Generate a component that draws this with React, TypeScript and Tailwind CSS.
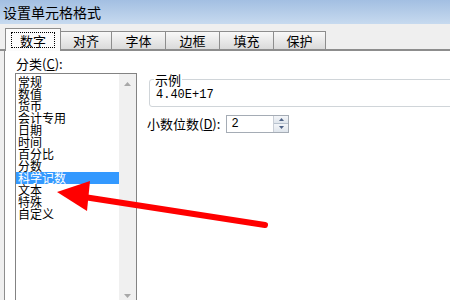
// Excel "设置单元格格式" dialog, number tab, with red annotation arrow

const FONT = '"Noto Sans CJK SC", "DejaVu Sans", sans-serif';

const tabs = ["数字", "对齐", "字体", "边框", "填充", "保护"];
const tabWidths = [56, 51, 54, 54, 54, 52];

const categories = [
  "常规",
  "数值",
  "货币",
  "会计专用",
  "日期",
  "时间",
  "百分比",
  "分数",
  "科学记数",
  "文本",
  "特殊",
  "自定义",
];

export default function App() {
  return (
    <div
      className="relative w-[450px] h-[300px] overflow-hidden bg-[#efefef] text-black"
      style={{ fontFamily: FONT }}
    >
      {/* Title bar */}
      <div className="h-[24px] bg-gradient-to-b from-[#a3bfe2] to-[#c7daef] pl-[3px] text-[14px] leading-[24px]">
        设置单元格格式
      </div>

      {/* Tabs */}
      <div className="flex items-end h-[27px] pl-[5px] border-b-2 border-[#8d8d8d]">
        {tabs.map((t, i) =>
          i === 0 ? (
            <div
              key={t}
              className="relative -mb-[2px] h-[23px] flex items-center justify-center border border-b-0 border-[#8d8d8d] bg-[#fbfbfb] z-10"
              style={{ width: tabWidths[i] }}
            >
              <span className="px-[8px] h-[16px] leading-[15px] text-[13px] border border-dotted border-black">
                {t}
              </span>
            </div>
          ) : (
            <div
              key={t}
              className="h-[18px] flex items-center justify-center border border-b-0 border-l-0 border-[#8d8d8d] bg-gradient-to-b from-[#f8f8f8] to-[#dadada] text-[13px] leading-none"
              style={{ width: tabWidths[i] }}
            >
              {t}
            </div>
          )
        )}
      </div>

      {/* Panel */}
      <div className="ml-[4px] h-[249px] bg-white border-l border-[#8d8d8d] flex">
        {/* Category list */}
        <div className="pl-[10px] pt-[6px] w-[136px]">
          <div className="text-[13px] leading-[14px] pl-[1px]">
            分类(<span className="underline">C</span>):
          </div>
          <div className="mt-[2px] w-[122px] h-[234px] border border-[#838383] flex">
            <div className="flex-1 pt-[2px]">
              {categories.map((c) => (
                <div
                  key={c}
                  className={
                    "h-[12px] text-[12px] leading-[12px] pl-[2px] " +
                    (c === "科学记数" ? "bg-[#3399ff] text-white" : "")
                  }
                >
                  {c}
                </div>
              ))}
            </div>
            <div className="w-[17px] bg-[#f0f0f0] flex flex-col items-center justify-between py-[8px]">
              <svg width="7" height="4" viewBox="0 0 7 4">
                <path d="M0 4 L3.5 0 L7 4 Z" fill="#a8a8a8" />
              </svg>
              <svg width="7" height="4" viewBox="0 0 7 4">
                <path d="M0 0 L3.5 4 L7 0 Z" fill="#a8a8a8" />
              </svg>
            </div>
          </div>
        </div>

        {/* Right column */}
        <div className="flex-1 pl-[6px] pt-[22px]">
          <fieldset className="ml-[2px] -mr-[20px] h-[34px] border border-[#d0d5d9] rounded-[3px] px-[4px]">
            <legend className="text-[13px] leading-[13px] px-[1px]">示例</legend>
            <div
              className="text-[12px] leading-[12px] pl-[2px] pt-[3px]"
              style={{ fontFamily: '"Liberation Mono", monospace' }}
            >
              4.40E+17
            </div>
          </fieldset>

          <div className="flex items-center mt-[8px] h-[17px]">
            <span className="text-[13px] leading-none">
              小数位数(<span className="underline">D</span>):
            </span>
            <div className="ml-[6px] w-[63px] h-[18px] border border-[#a5acb5] flex">
              <span
                className="flex-1 text-[12px] leading-[16px] pl-[4px]"
                style={{ fontFamily: '"Liberation Mono", monospace' }}
              >
                2
              </span>
              <div className="w-[15px] flex flex-col border-l border-[#c9ced6]">
                <div className="flex-1 flex items-center justify-center bg-gradient-to-b from-[#f4f6f9] to-[#dfe5ec] border-b border-[#b8c2ce]">
                  <svg width="5" height="3" viewBox="0 0 5 3">
                    <path d="M0 3 L2.5 0 L5 3 Z" fill="#4d6185" />
                  </svg>
                </div>
                <div className="flex-1 flex items-center justify-center bg-gradient-to-b from-[#f4f6f9] to-[#dfe5ec]">
                  <svg width="5" height="3" viewBox="0 0 5 3">
                    <path d="M0 0 L2.5 3 L5 0 Z" fill="#4d6185" />
                  </svg>
                </div>
              </div>
            </div>
          </div>
        </div>
      </div>

      {/* Red annotation arrow */}
      <svg
        className="absolute left-0 top-0 pointer-events-none"
        width="450"
        height="300"
        viewBox="0 0 450 300"
      >
        <line
          x1="84"
          y1="197"
          x2="265"
          y2="225"
          stroke="#ff0000"
          strokeWidth="6"
          strokeLinecap="round"
        />
        <path d="M57 192 L90 181 L87 211 Z" fill="#ff0000" />
      </svg>
    </div>
  );
}
